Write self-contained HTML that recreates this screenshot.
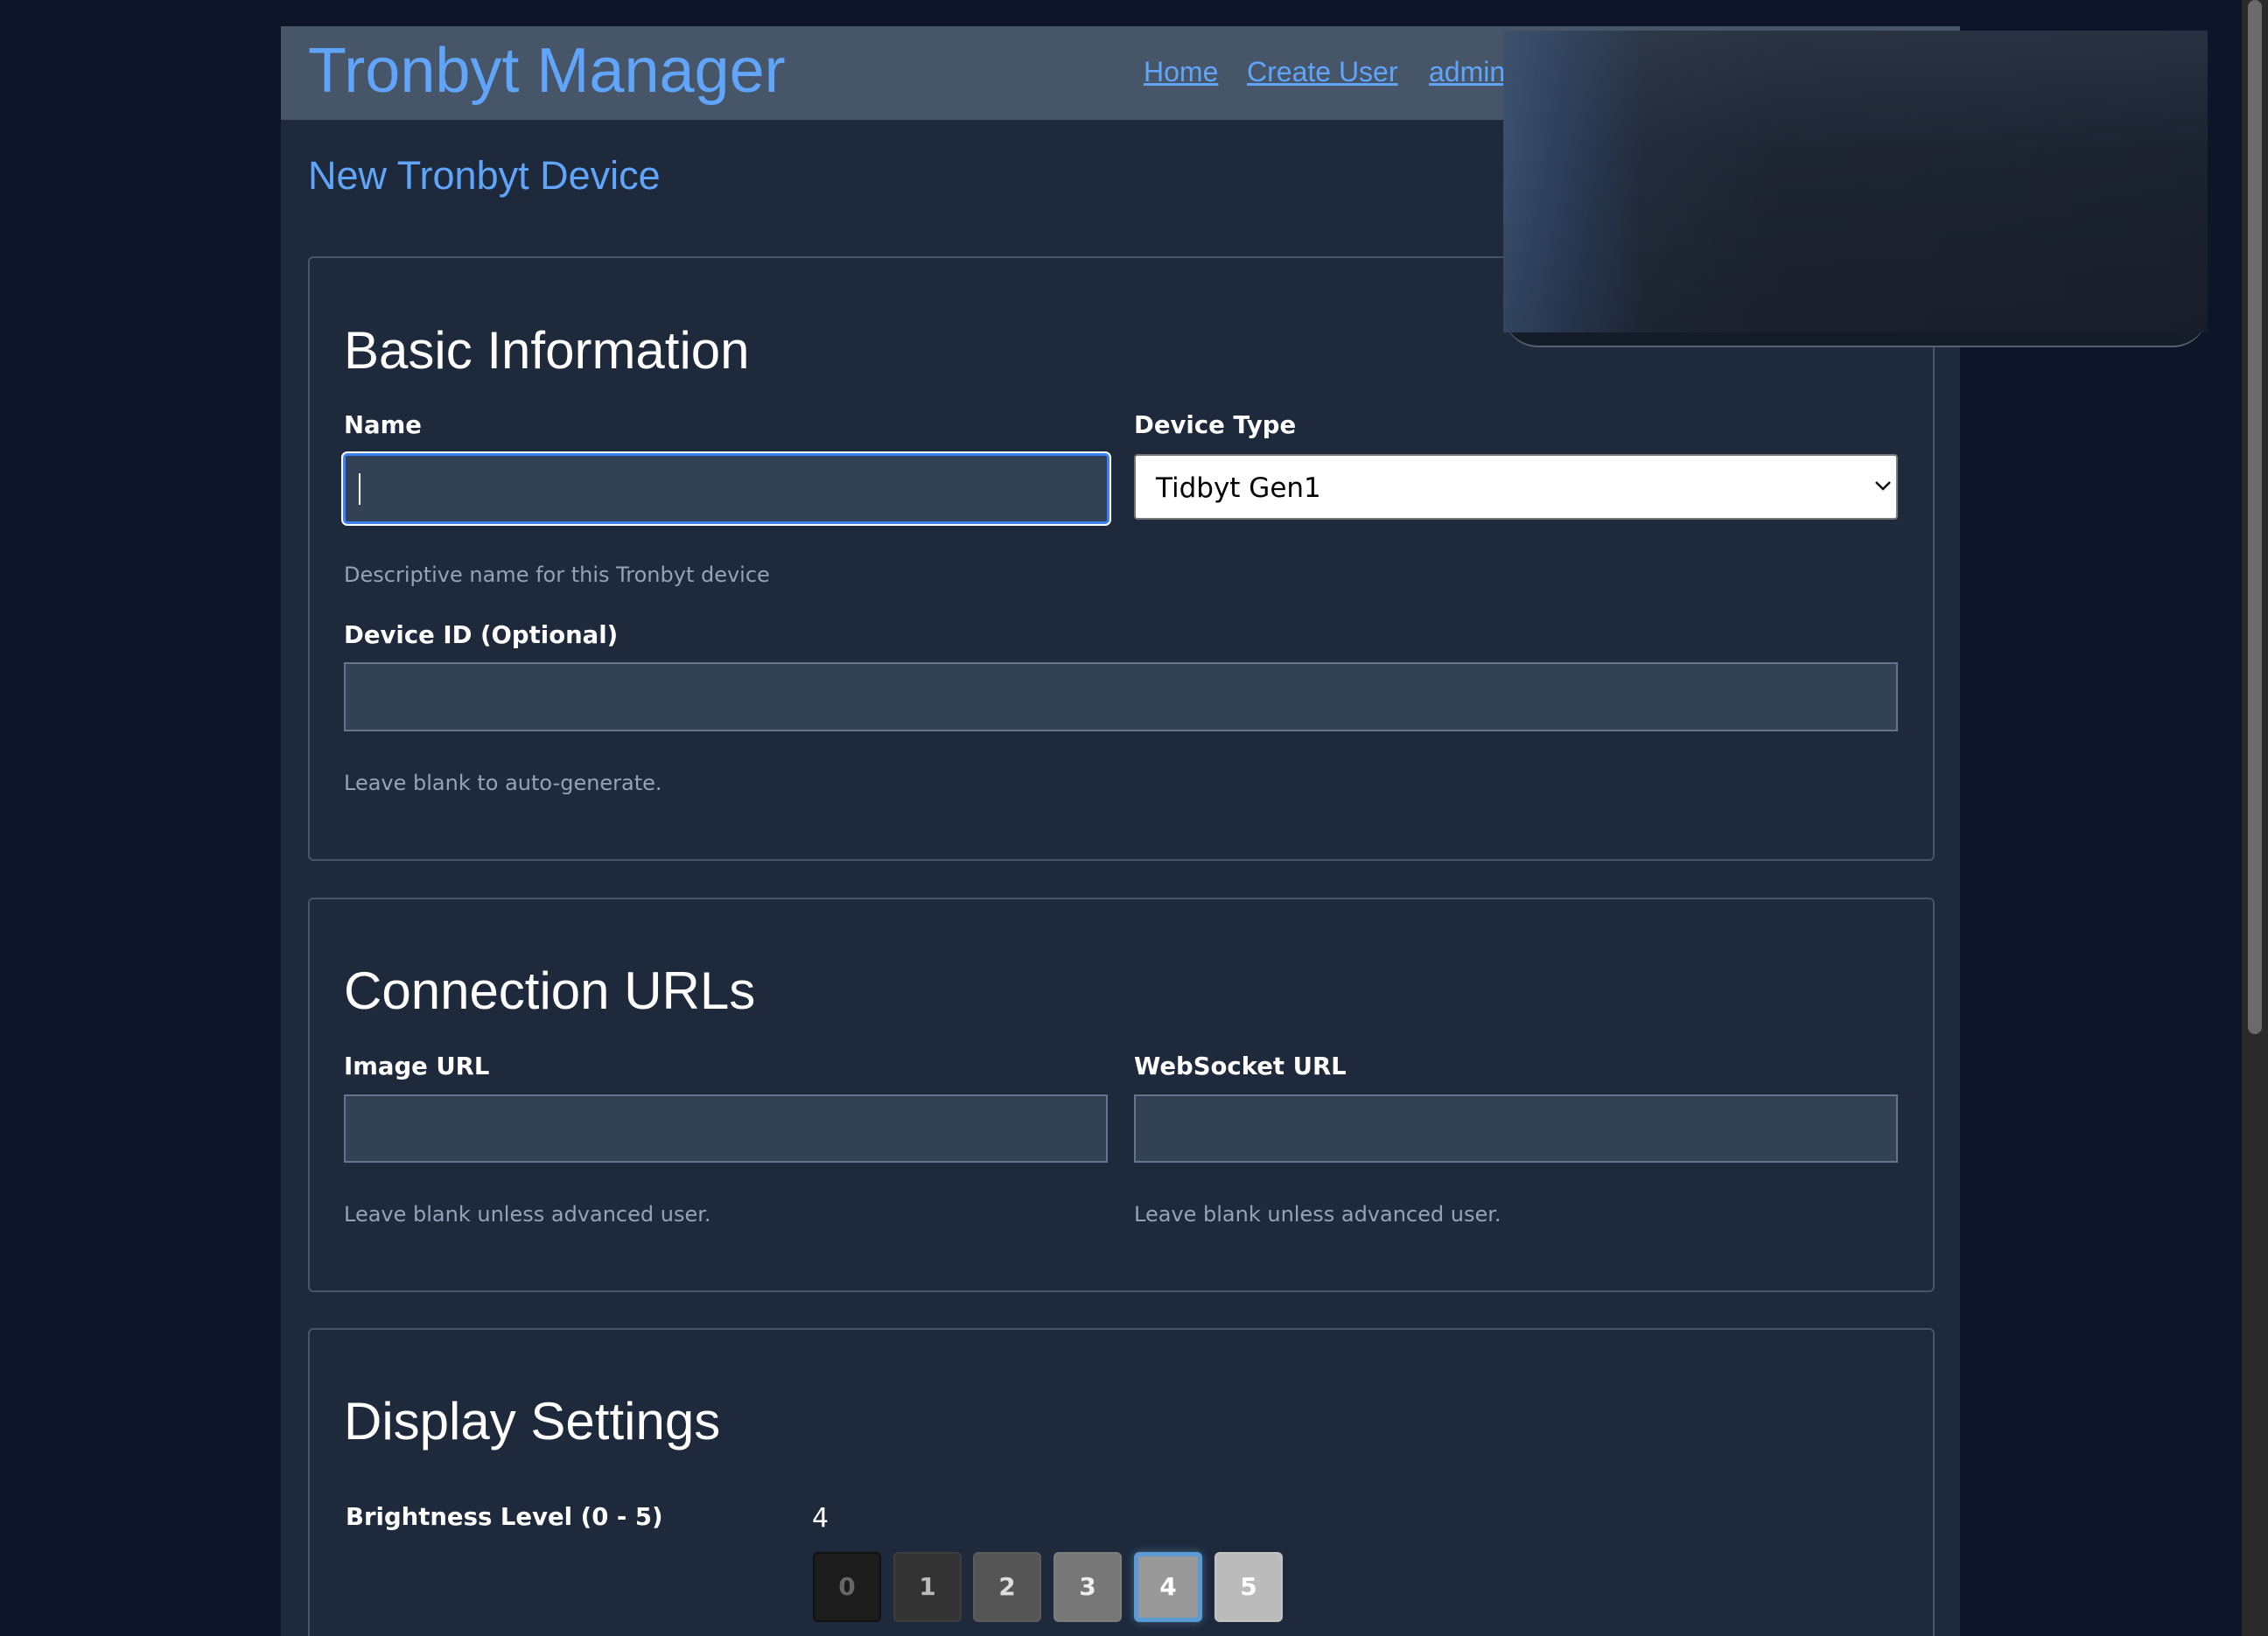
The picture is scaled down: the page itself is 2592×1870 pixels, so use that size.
<!DOCTYPE html>
<html><head><meta charset="utf-8"><style>
*{box-sizing:border-box;margin:0;padding:0}
html,body{width:2592px;height:1870px;overflow:hidden;background:#0d1528;font-family:"DejaVu Sans",sans-serif;position:relative}
.abs{position:absolute}
.wrap{left:321px;top:30px;width:1919px;height:1840px;background:#1e293b}
.hdr{left:321px;top:30px;width:1919px;height:107px;background:#475569}
.title{left:352px;top:40px;font:72px "Liberation Sans",sans-serif;color:#60a5fa;white-space:nowrap}
.nav{top:64px;font:32px "Liberation Sans",sans-serif;color:#60a5fa;text-decoration:underline;white-space:nowrap}
.h1{left:352px;top:175px;font:45px "Liberation Sans",sans-serif;color:#60a5fa;white-space:nowrap}
.card{left:352px;width:1859px;border:2px solid #475569;border-radius:6px}
.h2{font:60px "Liberation Sans",sans-serif;color:#fff;white-space:nowrap;left:393px}
.lbl{font:bold 27.5px "DejaVu Sans",sans-serif;color:#fff;white-space:nowrap}
.help{font:24px "DejaVu Sans",sans-serif;color:#94a3b8;white-space:nowrap}
.inp{background:#334155;border:2px solid #64748b}
.btn{top:1774px;width:78px;height:80px;border-radius:6px;font:bold 28px "DejaVu Sans",sans-serif;text-align:center;line-height:76px}
</style></head><body>
<div class="abs wrap"></div>
<div class="abs hdr"></div>
<div class="abs title">Tronbyt Manager</div>
<div class="abs nav" style="left:1307px">Home</div>
<div class="abs nav" style="left:1425px">Create User</div>
<div class="abs nav" style="left:1633px">admin</div>
<div class="abs h1">New Tronbyt Device</div>

<div class="abs card" style="top:293px;height:691px"></div>
<div class="abs h2" style="top:366px">Basic Information</div>
<div class="abs lbl" style="left:393px;top:470px">Name</div>
<div class="abs lbl" style="left:1296px;top:470px">Device Type</div>
<div class="abs inp" style="left:392px;top:518px;width:876px;height:81px;border:3px solid #3b82f6;border-radius:5px;box-shadow:0 0 0 2px #fff"></div>
<div class="abs" style="left:410px;top:541px;width:2px;height:36px;background:#fff"></div>
<div class="abs" style="left:1296px;top:519px;width:873px;height:75px;background:#fff;border:2px solid #777;border-radius:4px"></div>
<div class="abs" style="left:1321px;top:540px;font:31px 'DejaVu Sans',sans-serif;color:#000">Tidbyt Gen1</div>
<svg class="abs" style="left:2142px;top:548px" width="20" height="14"><path d="M2 3l8 8 8-8" stroke="#111" stroke-width="2.5" fill="none"/></svg>
<div class="abs help" style="left:393px;top:643px">Descriptive name for this Tronbyt device</div>
<div class="abs lbl" style="left:393px;top:710px">Device ID (Optional)</div>
<div class="abs inp" style="left:393px;top:757px;width:1776px;height:79px"></div>
<div class="abs help" style="left:393px;top:881px">Leave blank to auto-generate.</div>

<div class="abs card" style="top:1026px;height:451px"></div>
<div class="abs h2" style="top:1098px">Connection URLs</div>
<div class="abs lbl" style="left:393px;top:1203px">Image URL</div>
<div class="abs lbl" style="left:1296px;top:1203px">WebSocket URL</div>
<div class="abs inp" style="left:393px;top:1251px;width:873px;height:78px"></div>
<div class="abs inp" style="left:1296px;top:1251px;width:873px;height:78px"></div>
<div class="abs help" style="left:393px;top:1374px">Leave blank unless advanced user.</div>
<div class="abs help" style="left:1296px;top:1374px">Leave blank unless advanced user.</div>

<div class="abs card" style="top:1518px;height:352px;border-bottom:none;border-radius:6px 6px 0 0"></div>
<div class="abs h2" style="top:1590px">Display Settings</div>
<div class="abs lbl" style="left:395px;top:1718px">Brightness Level (0 - 5)</div>
<div class="abs" style="left:928px;top:1718px;font:30px 'DejaVu Sans',sans-serif;color:#fff">4</div>
<div class="abs btn" style="left:929px;background:#1c1c1c;color:#666;border:2px solid #111">0</div>
<div class="abs btn" style="left:1021px;background:#333;color:#bbb;border:2px solid #3d3d3d">1</div>
<div class="abs btn" style="left:1112px;background:#555;color:#ddd;border:2px solid #5c5c5c">2</div>
<div class="abs btn" style="left:1204px;background:#777;color:#eee;border:2px solid #7d7d7d">3</div>
<div class="abs btn" style="left:1296px;background:#999;color:#fff;border:5px solid #5b9bd5;line-height:70px;box-shadow:0 0 10px rgba(91,155,213,.5)">4</div>
<div class="abs btn" style="left:1388px;background:#bbb;color:#fff;border:2px solid #c2c2c2">5</div>

<div class="abs" style="left:1718px;top:35px;width:805px;height:362px;border-radius:0 0 40px 40px;background:#141c29;border-bottom:2px solid #556070"></div>
<div class="abs" style="left:1718px;top:35px;width:805px;height:345px;background:linear-gradient(90deg,#3a4f6e 0%,#2d3f5c 8%,#222b3a 20%,#1e2533 40%,#1d2432 70%,#1b2230 100%)"></div>
<div class="abs" style="left:1718px;top:35px;width:805px;height:345px;background:linear-gradient(180deg,rgba(70,85,105,.3) 0%,rgba(0,0,0,0) 40%,rgba(0,0,0,.15) 100%)"></div>

<div class="abs" style="left:2562px;top:0;width:30px;height:1870px;background:#2a2a2a"></div>
<div class="abs" style="left:2569px;top:0;width:16px;height:1182px;background:#6b6b6b;border-radius:8px"></div>
</body></html>
